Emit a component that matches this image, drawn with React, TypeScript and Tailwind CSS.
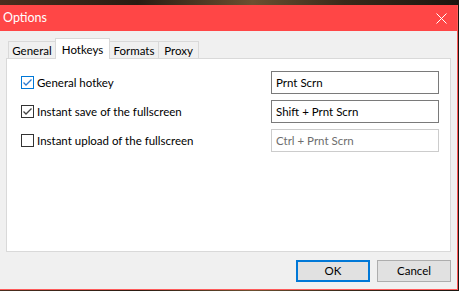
import React from "react";

const ui = { fontFamily: 'Lato, "Liberation Sans", sans-serif' };

function Check({ checked, focus }: { checked: boolean; focus?: boolean }) {
  const color = focus ? "#0078d7" : "#333333";
  return (
    <span
      className="flex h-[13px] w-[13px] shrink-0 items-center justify-center border bg-white"
      style={{ borderColor: color }}
    >
      {checked && (
        <svg width="11" height="11" viewBox="0 0 11 11">
          <path d="M1.5 5.5 L4 8 L9.5 2.5" fill="none" stroke={focus ? "#2b7bd0" : "#444"} strokeWidth="1.3" />
        </svg>
      )}
    </span>
  );
}

function Row({
  label,
  value,
  checked,
  focus,
  disabled,
}: {
  label: string;
  value: string;
  checked: boolean;
  focus?: boolean;
  disabled?: boolean;
}) {
  return (
    <div className="flex items-center justify-between">
      <label className="flex items-center gap-[3px] text-[11.5px] text-black">
        <Check checked={checked} focus={focus} />
        <span>{label}</span>
      </label>
      <div
        className={
          "flex h-[23px] w-[168px] items-center bg-white px-[4px] text-[11.5px] " +
          (disabled ? "border border-[#cccccc] text-[#6d6d6d]" : "border border-[#7a7a7a] text-black")
        }
      >
        {value}
      </div>
    </div>
  );
}

export default function App() {
  const tabs = [
    { name: "General", w: "w-[48px]" },
    { name: "Hotkeys", w: "w-[55px]", active: true },
    { name: "Formats", w: "w-[50px]" },
    { name: "Proxy", w: "w-[41px]" },
  ];

  return (
    <div
      className="h-[291px] w-[459px] overflow-hidden bg-[linear-gradient(90deg,#4a2e1e,#2a1c12_30%,#6b5030_55%,#3a2a1a_75%,#1c1610)] pt-[5px]"
      style={ui}
    >
      <div className="flex h-[285px] w-[458px] flex-col border-b border-r border-[#ff5a5a] bg-[#f0f0f0]">
        <div className="flex h-[26px] shrink-0 items-center justify-between bg-[#ff4646] pl-[3px] pr-[10px] text-[12.5px] text-white">
          <span>Options</span>
          <svg width="11" height="11" viewBox="0 0 11 11">
            <path d="M0.5 0.5 L10.5 10.5 M10.5 0.5 L0.5 10.5" stroke="white" strokeWidth="1" />
          </svg>
        </div>

        <div className="flex flex-1 flex-col px-[6px] pt-[7px]">
          <div className="flex h-[20px] items-end pl-[2px]">
            {tabs.map((t, i) =>
              t.active ? (
                <div
                  key={t.name}
                  className={`relative z-10 -mb-px -ml-px flex h-[21px] ${t.w} items-start justify-center border border-b-0 border-[#d9d9d9] bg-white pt-[2px] text-[11.5px] text-black`}
                >
                  {t.name}
                </div>
              ) : (
                <div
                  key={t.name}
                  className={`${i > 0 ? "-ml-px" : ""} flex h-[17px] ${t.w} items-center justify-center border border-b-0 border-[#d9d9d9] bg-[#f0f0f0] pt-[1px] text-[11.5px] text-black`}
                >
                  {t.name}
                </div>
              )
            )}
          </div>

          <div className="flex h-[194px] flex-col gap-[6px] border border-[#d9d9d9] bg-white pl-[14px] pr-[11px] pt-[12px]">
            <Row label="General hotkey" value="Prnt Scrn" checked focus />
            <Row label="Instant save of the fullscreen" value="Shift + Prnt Scrn" checked />
            <Row label="Instant upload of the fullscreen" value="Ctrl + Prnt Scrn" checked={false} disabled />
          </div>

          <div className="mt-[8px] flex justify-end gap-[7px]">
            <button className="h-[22px] w-[74px] border-2 border-[#0078d7] bg-[#e1e1e1] text-[11.5px] text-black">
              OK
            </button>
            <button className="h-[22px] w-[74px] border border-[#adadad] bg-[#e1e1e1] text-[11.5px] text-black">
              Cancel
            </button>
          </div>
        </div>
      </div>
    </div>
  );
}
